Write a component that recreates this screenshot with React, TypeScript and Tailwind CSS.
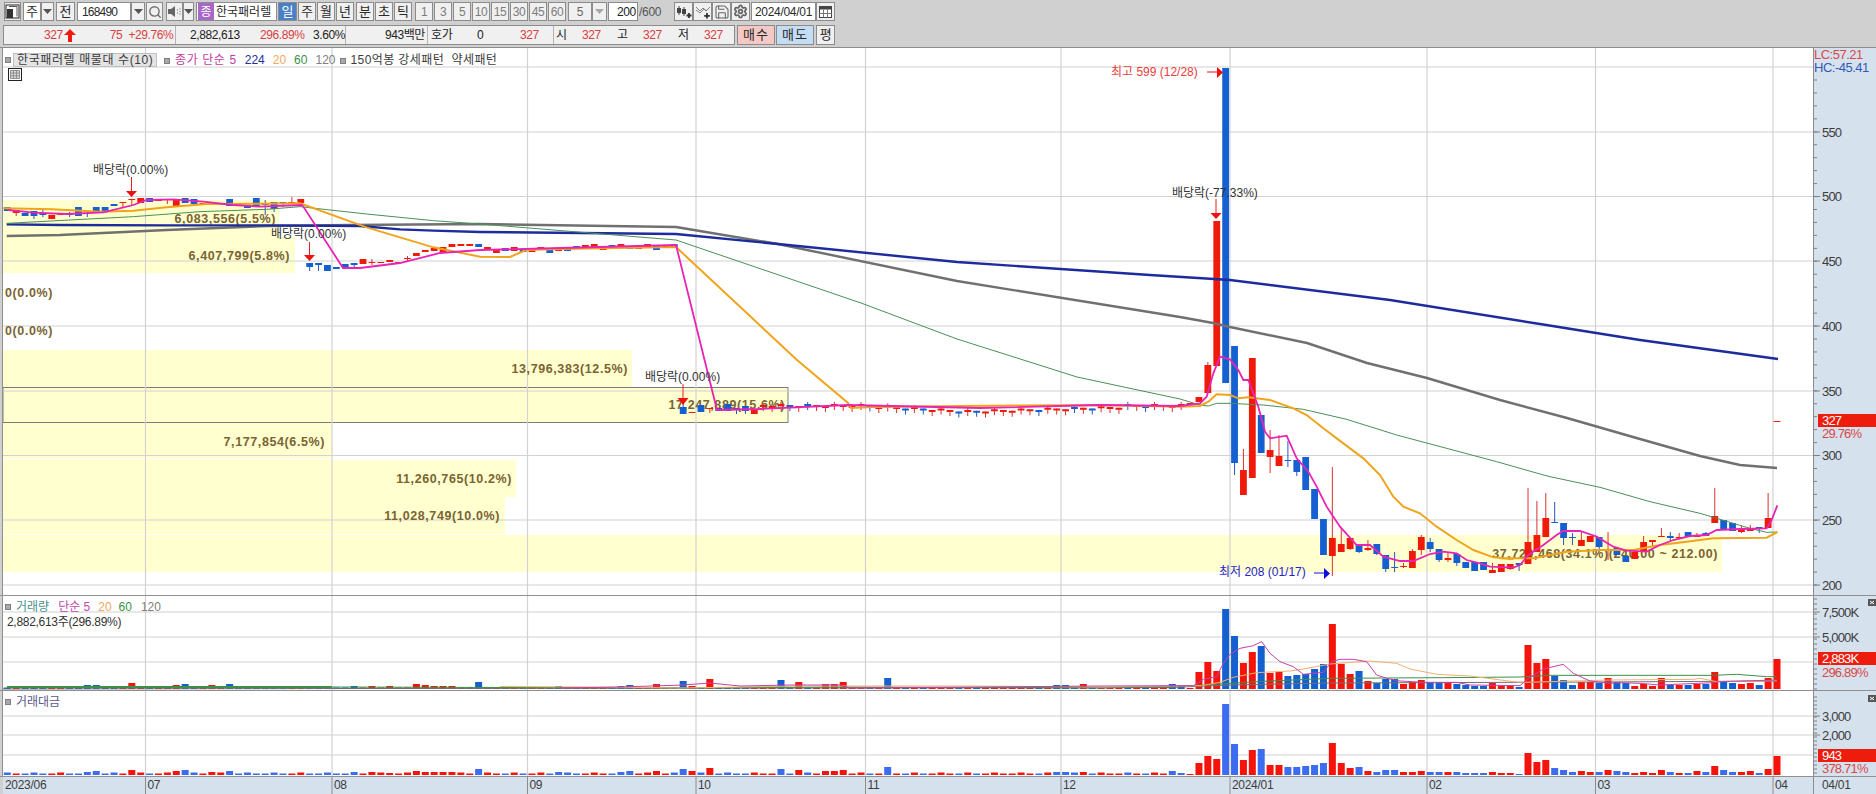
import React from 'react';
import { Search, Save, Settings } from 'lucide-react';
import { twMerge } from 'tailwind-merge';

type Candle = { c: 'r' | 'b'; t: number; b: number; wt?: number; wb?: number };

const cd = (c: 'r' | 'b', t: number, b: number, wt?: number, wb?: number): Candle => ({ c, t, b, wt, wb });

// chart data, traced by hand (screen px)
const head: Candle[] = [
  cd('b', 207, 211), cd('r', 210, 213, 210, 216), cd('b', 213, 216), cd('b', 211, 216, 211, 219), cd('b', 213, 215, 210, 217),
  cd('r', 215, 219), cd('r', 213, 215), cd('b', 214, 215, 212, 217), cd('b', 207, 216), cd('b', 211, 212, 211, 217),
  cd('b', 207, 212), cd('b', 207, 211), cd('b', 204, 206), cd('r', 202, 203, 202, 207), cd('r', 199, 200, 199, 205),
  cd('r', 198, 203), cd('b', 198, 202), cd('r', 200, 201), cd('r', 199, 200, 199, 204), cd('r', 199, 207),
  cd('b', 198, 203), cd('b', 199, 204), cd('r', 203, 204), cd('r', 204, 205), cd('r', 203, 204),
  cd('b', 199, 206), cd('b', 203, 206), cd('b', 205, 208), cd('b', 198, 207), cd('b', 204, 205, 200, 215),
  cd('b', 202, 209, 202, 212), cd('b', 202, 203, 202, 207), cd('r', 202, 204, 197, 204), cd('r', 199, 203),
  cd('b', 263, 267, 263, 271), cd('b', 263, 265, 263, 271), cd('b', 265, 271), cd('b', 267, 269), cd('b', 264, 268),
  cd('b', 263, 265, 263, 267), cd('r', 259, 264), cd('r', 262, 263, 259, 265), cd('r', 262, 263), cd('r', 260, 262),
  cd('r', 262, 263), cd('r', 258, 259, 256, 262), cd('r', 253, 256), cd('r', 250, 252), cd('r', 248, 251),
  cd('r', 247, 252), cd('r', 244, 247), cd('r', 244, 246), cd('r', 244, 246), cd('b', 244, 247),
];

const midPat = 'rbrrbrbbrrrbrbrrbrbbrrbrbbbrrbrbbrrrbrbrrbbrbrrbrrbrbbrrb';

const midBase = (i: number) => {
  if (i < 64) return 247;
  if (i < 76) return 244;
  if (i < 96) return 404;
  if (i < 108) return 404 + (i - 96) / 2;
  if (i < 126) return 410 - (i - 108) / 4;
  return 404;
};

const middle: Candle[] = [];
for (let i = 54; i < 76; i++) {
  const t = midBase(i) + (i * 5) % 3;
  middle.push(cd(midPat[i % midPat.length] as 'r' | 'b', t, t + 3 + (i % 2)));
}
middle.push(
  cd('b', 407, 414, 398, 414), cd('r', 412, 413), cd('b', 405, 412), cd('r', 408, 409, 408, 413), cd('b', 408, 411),
  cd('b', 404, 411), cd('b', 408, 410, 408, 414), cd('b', 406, 411, 406, 414), cd('r', 409, 414),
);
for (let i = 85; i < 133; i++) {
  const t = midBase(i) + (i * 7) % 3;
  middle.push(cd(midPat[(i * 3) % midPat.length] as 'r' | 'b', t, t + 2 + (i * 5) % 5, t - (i % 3 === 0 ? 2 : 0), t + 6));
}
middle.push(cd('r', 403, 405), cd('r', 397, 402));

const tail: Candle[] = [
  cd('r', 365, 393, 362, 393), cd('r', 221, 366), cd('b', 68, 383), cd('b', 346, 463, 346, 475), cd('r', 470, 495, 449, 495),
  cd('r', 358, 478), cd('b', 415, 453), cd('r', 450, 457, 430, 473), cd('r', 456, 466, 435, 466), cd('b', 460, 461, 441, 467),
  cd('b', 460, 472, 460, 476), cd('b', 457, 490), cd('b', 489, 519), cd('b', 519, 555), cd('r', 538, 556, 467, 576),
  cd('r', 544, 552, 528, 552), cd('r', 538, 549, 538, 550), cd('b', 544, 552, 544, 553), cd('r', 548, 550, 540, 551), cd('b', 544, 554, 544, 555),
  cd('b', 555, 569, 555, 572), cd('b', 567, 568, 552, 572), cd('r', 566, 567, 563, 568), cd('r', 551, 568, 549, 568), cd('r', 537, 550, 535, 555),
  cd('b', 542, 549, 538, 552), cd('b', 549, 560, 549, 562), cd('r', 558, 560, 553, 562), cd('b', 554, 563, 554, 566), cd('b', 562, 568),
  cd('b', 562, 571), cd('b', 562, 570), cd('r', 570, 573, 563, 573), cd('r', 564, 572), cd('r', 564, 569, 564, 570),
  cd('b', 563, 565, 563, 571), cd('r', 542, 564, 488, 564), cd('r', 535, 552, 501, 552), cd('r', 518, 537, 493, 537), cd('b', 522, 523, 502, 523),
  cd('b', 523, 538, 523, 545), cd('b', 537, 538, 533, 545), cd('r', 540, 546, 532, 546), cd('r', 536, 542), cd('b', 537, 547, 537, 549),
  cd('r', 550, 551, 532, 560), cd('b', 548, 555), cd('b', 556, 562), cd('r', 552, 559, 550, 559), cd('r', 542, 552, 536, 552),
  cd('r', 540, 542, 540, 547), cd('r', 536, 537, 528, 537), cd('b', 536, 538, 532, 542), cd('r', 537, 538, 533, 538), cd('b', 532, 537),
  cd('r', 536, 537, 533, 537), cd('b', 533, 536, 532, 536), cd('r', 516, 523, 488, 523), cd('b', 520, 530), cd('b', 523, 531),
  cd('r', 529, 532, 526, 533), cd('r', 528, 531, 525, 531), cd('b', 527, 528, 527, 533), cd('r', 518, 528, 493, 528), cd('r', 421, 422),
];

const candles = [...head, ...middle, ...tail];
const xAt = (i: number) => 7.3 + i * 8.893;

// [volume px, trading value px, colour override]
const bars: Record<number, [number, number, ('r' | 'b')?]> = {
  9: [4, 3], 10: [4, 4], 14: [6, 5], 19: [4, 4], 20: [5, 5], 23: [4, 3], 25: [5, 4], 39: [3, 3], 41: [3, 3], 43: [3, 2], 46: [5, 4],
  47: [4, 3], 48: [3, 3], 49: [3, 3], 50: [3, 3], 53: [7, 6], 62: [3, 3, 'b'], 69: [3, 3, 'b'], 70: [4, 4, 'b'], 73: [5, 4, 'r'], 76: [8, 6, 'b'],
  77: [3, 4, 'r'], 79: [10, 7, 'r'], 87: [9, 6, 'b'], 89: [7, 5, 'r'], 92: [5, 4, 'r'], 93: [5, 4, 'r'], 94: [7, 5, 'r'], 99: [11, 8, 'b'],
  118: [4, 3, 'b'], 119: [4, 3, 'b'], 121: [5, 3, 'r'],
  131: [5, 4, 'b'], 132: [3, 2, 'b'], 133: [1, 1, 'r'], 134: [17, 12, 'r'], 135: [27, 19, 'r'], 136: [18, 16, 'r'], 137: [80, 71, 'b'],
  138: [53, 31, 'b'], 139: [26, 15, 'r'], 140: [37, 25, 'r'], 141: [43, 26, 'b'], 142: [16, 10, 'r'], 143: [17, 10, 'r'], 144: [13, 8, 'b'],
  145: [14, 8, 'b'], 146: [15, 9, 'b'], 147: [20, 10, 'b'], 148: [25, 12, 'b'], 149: [65, 32, 'r'], 150: [25, 12, 'r'], 151: [15, 7, 'r'],
  152: [18, 8, 'b'], 153: [8, 4, 'r'], 154: [6, 3, 'b'], 155: [10, 5, 'b'], 156: [10, 5, 'b'], 157: [5, 3, 'r'], 158: [7, 3, 'r'], 159: [9, 4, 'r'],
  160: [7, 3, 'b'], 161: [6, 3, 'b'], 162: [6, 3, 'r'], 163: [5, 3, 'b'], 164: [4, 2, 'b'], 165: [3, 2, 'b'], 166: [3, 2, 'b'], 167: [6, 3, 'r'],
  168: [3, 2, 'r'], 169: [3, 2, 'r'], 170: [2, 1, 'b'], 171: [44, 22, 'r'], 172: [26, 13, 'r'], 173: [30, 15, 'r'], 174: [13, 7, 'b'],
  175: [9, 5, 'b'], 176: [4, 3, 'b'], 177: [7, 4, 'r'], 178: [7, 3, 'r'], 179: [6, 3, 'b'], 180: [11, 5, 'r'], 181: [7, 4, 'b'], 182: [6, 3, 'b'],
  183: [3, 2, 'r'], 184: [5, 3, 'r'], 185: [3, 2, 'r'], 186: [11, 5, 'r'], 187: [4, 3, 'b'], 188: [4, 2, 'r'], 189: [4, 2, 'b'], 190: [5, 4, 'r'],
  191: [5, 3, 'b'], 192: [17, 9, 'r'], 193: [8, 5, 'b'], 194: [6, 3, 'b'], 195: [5, 3, 'r'], 196: [6, 4, 'r'], 197: [4, 2, 'b'], 198: [11, 6, 'r'],
  199: [30, 19, 'r'],
};

const crop = (ox: number, oy: number, pts: number[][]) => pts.map(([x, y]) => `${ox + x / 3},${oy + y / 3}`).join(' ');

const pink = [
  crop(0, 150, [[24, 180], [100, 188], [200, 192], [310, 187], [400, 165], [440, 150], [520, 148], [610, 155], [700, 165], [780, 170], [905, 165]]),
  '303,206 343,268 360,268 400,263 440,253 480,250 560,248 676,245 717,410 760,409 848,405 980,408 1100,405',
  crop(1180, 300, [[0, 318], [60, 310], [80, 290], [100, 220], [120, 170], [150, 178], [175, 210], [190, 240], [205, 240], [235, 320], [255, 395], [270, 415], [320, 407], [350, 475], [385, 515], [410, 560], [440, 620], [480, 680], [530, 735], [570, 735], [610, 770], [660, 783], [700, 783], [750, 762], [790, 755], [830, 760], [860, 780], [900, 790], [930, 800], [1000, 803]]),
  crop(1500, 400, [[60, 495], [85, 465], [130, 435], [170, 405], [190, 393], [240, 393], [290, 410], [340, 440], [380, 452], [440, 455], [480, 435], [520, 420], [570, 408], [620, 405], [650, 390], [720, 387], [800, 385], [815, 360], [832, 316]]),
].join(' ');

const orange = [
  crop(0, 150, [[10, 175], [155, 178], [300, 185], [400, 182], [500, 172], [620, 162], [900, 160], [1100, 232], [1300, 292], [1440, 320]]),
  '510,257 526,250 560,249 676,247 797,360 848,403 851,408 873,407 960,406 1100,405',
  crop(1180, 300, [[0, 320], [60, 318], [85, 305], [110, 283], [150, 285], [175, 295], [205, 292], [270, 300], [340, 325], [380, 345], [430, 385], [490, 430], [550, 475], [600, 525], [640, 590], [670, 620], [720, 640], [770, 680], [830, 720], [880, 750], [940, 772], [1000, 777]]),
  crop(1500, 400, [[0, 475], [100, 475], [200, 455], [300, 450], [400, 450], [480, 435], [560, 425], [640, 415], [800, 413], [832, 396]]),
].join(' ');

const green = [
  crop(0, 150, [[20, 220], [400, 200], [600, 185], [800, 178], [900, 170], [1100, 192], [1300, 212], [1440, 222]]),
  '676,240 861,303 957,339 1077,377 1180,399',
  crop(1180, 300, [[60, 315], [85, 318], [110, 310], [150, 310], [250, 315], [370, 328], [500, 358], [650, 405], [800, 445], [950, 485], [1080, 522]]),
  crop(1500, 400, [[150, 230], [300, 262], [450, 305], [600, 340], [700, 370], [750, 385], [800, 397], [832, 396]]),
].join(' ');

const navy = [
  crop(0, 150, [[20, 223], [180, 225], [500, 226], [800, 226], [1080, 228], [1200, 238], [1300, 242], [1440, 246]]),
  '676,234 778,244 957,262 1150,275 1230,280 1390,300 1540,324 1640,340 1778,359',
].join(' ');

const gray = [
  crop(0, 150, [[20, 258], [180, 255], [500, 240], [800, 228], [1050, 225], [1440, 222]]),
  '676,227 778,244 957,281 1180,317 1213,323 1230,327 1307,343 1367,363 1427,378 1500,400 1567,418 1633,437 1700,456 1740,465 1777,468',
].join(' ');

const volPink = [
  '560,688 620,687 683,685 710,683 740,686 790,685 840,685 850,688 980,687 1100,686',
  crop(1170, 595, [[70, 272], [100, 253], [140, 245], [160, 205], [180, 178], [210, 160], [250, 152], [275, 140], [300, 175], [330, 200], [370, 215], [400, 238], [460, 232], [485, 200], [510, 193], [550, 193], [590, 200], [620, 240], [650, 250], [690, 258], [760, 262], [860, 262], [900, 270], [1050, 272], [1075, 250], [1120, 222], [1180, 208], [1210, 235], [1260, 258], [1320, 265]]),
  crop(1600, 590, [[60, 278], [120, 280], [180, 285], [340, 278], [360, 275], [530, 270]]),
].join(' ');
const volOrange = [
  '500,686.5 600,687 680,688 803,686 971,686 1100,687',
  crop(1170, 595, [[95, 272], [150, 262], [190, 247], [260, 233], [360, 228], [400, 222], [480, 207], [600, 198], [680, 205], [720, 222], [800, 238], [900, 243], [1030, 260], [1060, 262], [1320, 255]]),
  crop(1600, 590, [[280, 268], [300, 265], [350, 275], [530, 272]]),
].join(' ');
const volGreen = [
  '7,687 332,687 680,688 840,687 1100,688',
  crop(1170, 595, [[70, 272], [180, 265], [280, 259], [480, 250], [820, 248], [1050, 246], [1140, 241], [1320, 241]]),
  crop(1600, 590, [[340, 256], [410, 253], [500, 260], [530, 260]]),
].join(' ');
const volGray = '3,689 1170,687.5 1230,685 1330,683 1600,682 1777,681';

const volumeBands = [
  { y: 200, h: 37, w: 279, label: '6,083,556(5.5%)', tx: 276 },
  { y: 237, h: 36, w: 295, label: '6,407,799(5.8%)', tx: 290 },
  { y: 350, h: 37, w: 632, label: '13,796,383(12.5%)', tx: 628 },
  { y: 423, h: 36, w: 332, label: '7,177,854(6.5%)', tx: 325 },
  { y: 460, h: 37, w: 516, label: '11,260,765(10.2%)', tx: 512 },
  { y: 497, h: 37, w: 505, label: '11,028,749(10.0%)', tx: 500 },
  { y: 535, h: 37, w: 1722, label: '37,720,468(34.1%)(240.00 ~ 212.00)', tx: 1718 },
];

const months = [145.5, 332, 527.5, 696, 865.5, 1061, 1230, 1427, 1595.5, 1773];
const monthLabels = ['07', '08', '09', '10', '11', '12', '2024/01', '02', '03', '04'];

const DownArrow = ({ x, y1, y2, tip }: { x: number; y1: number; y2: number; tip: number }) => (
  <g>
    <line x1={x} x2={x} y1={y1} y2={y2} stroke="#e82020" strokeWidth={1} />
    <polygon points={`${x - 5.5},${y2} ${x + 5.5},${y2} ${x},${tip}`} fill="#f01010" />
  </g>
);

const Grid = ({ ys }: { ys: number[] }) => (
  <g stroke="#d2d2d2" strokeWidth={1.2}>
    {ys.map((y) => <line key={y} x1={3} x2={1813} y1={y} y2={y} />)}
    {months.map((x) => <line key={x} x1={x} x2={x} y1={0} y2={800} />)}
  </g>
);

const BarSeries = ({ base, which, blue }: { base: number; which: 0 | 1; blue: string }) => (
  <g>
    {candles.map((k, i) => {
      const o = bars[i];
      const h = o ? o[which] : which === 0 ? 1.5 : 1 + (i % 3 === 0 ? 1.5 : 0.5);
      const color = (o && o[2]) || k.c;
      return <rect key={i} x={xAt(i) - 3.5} y={base - h} width={7} height={h} fill={color === 'r' ? '#f4140c' : blue} />;
    })}
  </g>
);

const MainChart = () => (
  <svg viewBox="3 48 1810 547" className="block h-[547px] w-[1810px] shrink-0">
    <rect x={3} y={48} width={1810} height={547} fill="#ffffff" />
    <g>
      {volumeBands.map((b) => <rect key={b.y} x={3} y={b.y} width={b.w - 3} height={b.h} fill="#ffffcf" />)}
      <rect x={3} y={387.5} width={785} height={35} fill="#ffffcf" stroke="#7c7c7c" strokeWidth={1} />
    </g>
    <Grid ys={[67, 132, 196.5, 261, 326, 391, 455.5, 520, 585]} />
    <g fill="#7a6432" fontSize={12.5} fontWeight={700} letterSpacing={0.6} textAnchor="end">
      {volumeBands.map((b) => <text key={b.y} x={b.tx} y={b.y + b.h / 2 + 4.5}>{b.label}</text>)}
      <text x={785} y={408.5}>17,247,889(15.6%)</text>
      <text x={53} y={296.5}>0(0.0%)</text>
      <text x={53} y={334.5}>0(0.0%)</text>
    </g>
    <g>
      {candles.map((k, i) => {
        const x = xAt(i);
        const fill = k.c === 'r' ? '#f01a0a' : '#1460d0';
        return (
          <g key={i}>
            {k.wt !== undefined && (
              <line x1={x} x2={x} y1={k.wt} y2={k.wb} stroke={k.c === 'r' ? '#dc3030' : '#2a54c0'} strokeWidth={1} />
            )}
            <rect x={x - 3.4} y={k.t} width={6.8} height={k.b - k.t} fill={fill} />
          </g>
        );
      })}
    </g>
    <polyline points={gray} fill="none" stroke="#707070" strokeWidth={2.4} />
    <polyline points={navy} fill="none" stroke="#1c2c9c" strokeWidth={2.4} />
    <polyline points={green} fill="none" stroke="#4a9058" strokeWidth={1} />
    <polyline points={orange} fill="none" stroke="#f0a41c" strokeWidth={2} />
    <polyline points={pink} fill="none" stroke="#e824b4" strokeWidth={1.8} />
    <g fill="#333333" fontSize={12}>
      <text x={93} y={173.5}>배당락(0.00%)</text>
      <text x={271} y={237.5}>배당락(0.00%)</text>
      <text x={645} y={380.5}>배당락(0.00%)</text>
      <text x={1172} y={196.5}>배당락(-77.33%)</text>
    </g>
    <DownArrow x={131.5} y1={177} y2={191} tip={197} />
    <DownArrow x={309.5} y1={242} y2={255} tip={261} />
    <DownArrow x={683} y1={384} y2={398} tip={405} />
    <DownArrow x={1216} y1={199} y2={213} tip={219} />
    <text x={1111} y={76} fill="#e84040" fontSize={12}>최고 599 (12/28)</text>
    <line x1={1207} x2={1218} y1={72} y2={72} stroke="#f01010" />
    <polygon points="1217,67 1217,78 1223,72.5" fill="#f01010" />
    <text x={1219} y={576} fill="#2424c8" fontSize={12}>최저 208 (01/17)</text>
    <line x1={1314} x2={1325} y1={573} y2={573} stroke="#1010d8" />
    <polygon points="1324,568 1324,579 1330,573.5" fill="#1010d8" />
  </svg>
);

const VolumeChart = () => (
  <svg viewBox="3 596 1810 94" className="block h-[94px] w-[1810px] shrink-0">
    <rect x={3} y={596} width={1810} height={94} fill="#ffffff" />
    <Grid ys={[612, 637, 662]} />
    <BarSeries base={689} which={0} blue="#1460d0" />
    <polyline points={volGray} fill="none" stroke="#707070" strokeWidth={1} />
    <polyline points={volGreen} fill="none" stroke="#3c9048" strokeWidth={1} />
    <line x1={7} x2={332} y1={687} y2={687} stroke="#3c9048" strokeWidth={1.8} />
    <polyline points={volOrange} fill="none" stroke="#f0b070" strokeWidth={1} />
    <polyline points={volPink} fill="none" stroke="#c440ac" strokeWidth={1} />
  </svg>
);

const ValueChart = () => (
  <svg viewBox="3 691 1810 85" className="block h-[85px] w-[1810px] shrink-0">
    <rect x={3} y={691} width={1810} height={85} fill="#ffffff" />
    <Grid ys={[716, 735, 755]} />
    <BarSeries base={775} which={1} blue="#3c6cf0" />
  </svg>
);

type AxisProps = {
  top: number;
  height: number;
  majors: { y: number; label: string }[];
  minors: number[];
  tag?: { y: number; h: number; label: string; pct: string; pctY: number };
  closeY?: number;
  children?: React.ReactNode;
};

const Axis = ({ top, height, majors, minors, tag, closeY, children }: AxisProps) => (
  <svg viewBox={`1813 ${top} 63 ${height}`} className="block w-[63px] shrink-0" style={{ height }}>
    <rect x={1813} y={top} width={63} height={height} fill="#d6e1ee" />
    <line x1={1813.5} x2={1813.5} y1={top} y2={top + height} stroke="#8c8c8c" />
    <g stroke="#7f7f7f">
      {minors.map((y) => <line key={y} x1={1814} x2={1817} y1={y} y2={y} />)}
      {majors.map((m) => <line key={m.y} x1={1814} x2={1820} y1={m.y} y2={m.y} />)}
    </g>
    <g fill="#3c3c3c" fontSize={13} letterSpacing={-0.8}>
      {majors.map((m) => <text key={m.y} x={1822} y={m.y + 4.5}>{m.label}</text>)}
    </g>
    {tag && (
      <g fontSize={13} letterSpacing={-0.8}>
        <rect x={1818} y={tag.y} width={58} height={tag.h} fill="#ee1c0c" />
        <text x={1822} y={tag.y + tag.h - 2} fill="#ffffff">{tag.label}</text>
        <text x={1822} y={tag.pctY} fill="#d84848">{tag.pct}</text>
      </g>
    )}
    {closeY !== undefined && (
      <g>
        <rect x={1868} y={closeY} width={8} height={7} fill="#555555" />
        <path d={`M1870 ${closeY + 2}l4 3m0 -3l-4 3`} stroke="#ffffff" strokeWidth={1} />
      </g>
    )}
    {children}
  </svg>
);

const range = (from: number, to: number, step: number) => {
  const out: number[] = [];
  for (let v = from; v <= to; v += step) out.push(v);
  return out;
};

const priceMajors = [
  { y: 132, label: '550' }, { y: 196.5, label: '500' }, { y: 261, label: '450' }, { y: 326, label: '400' },
  { y: 391, label: '350' }, { y: 455.5, label: '300' }, { y: 520, label: '250' }, { y: 585, label: '200' },
];

const Caret = ({ dim }: { dim?: boolean }) => (
  <svg viewBox="0 0 9 5" className="h-[5px] w-[9px]"><polygon points="0,0 9,0 4.5,5" fill={dim ? '#a8a8a8' : '#555555'} /></svg>
);

const Btn = ({ className, children }: { className: string; children?: React.ReactNode }) => (
  <div className={twMerge('flex h-[19px] shrink-0 items-center justify-center border border-[#8c8c8c] bg-[#f0f0f0] text-[13px] text-[#2a2a2a]', className)}>
    {children}
  </div>
);

const Dot = () => <span className="inline-block size-[6px] shrink-0 border border-[#808080] bg-[#a8a8a8]" />;

const Toolbar = () => (
  <div className="h-[47px] shrink-0 bg-[#d0d0d0] pt-[2px]">
    <div className="flex pl-[4px]">
      <Btn className="w-[17px]">
        <svg viewBox="0 0 15 15" className="size-[15px]">
          <rect x="1" y="1" width="13" height="13" fill="#ffffff" stroke="#222222" />
          <rect x="2" y="5" width="6" height="9" fill="#333333" />
          <path d="M4 2.5h8M12 2.5v10" stroke="#555555" fill="none" />
        </svg>
      </Btn>
      <Btn className="ml-[2px] w-[18px] bg-white">주</Btn>
      <Btn className="w-[13px]"><Caret /></Btn>
      <Btn className="ml-[2px] w-[19px]">전</Btn>
      <Btn className="ml-[2px] w-[54px] justify-start bg-white pl-[4px] text-[12px] tracking-[-0.8px]">168490</Btn>
      <Btn className="w-[14px]"><Caret /></Btn>
      <Btn className="ml-px w-[17px]"><Search size={14} strokeWidth={2.4} className="text-[#707070]" /></Btn>
      <Btn className="ml-[3px] w-[17px]">
        <svg viewBox="0 0 15 13" className="h-[13px] w-[15px]">
          <polygon points="1,4 4,4 8,1 8,12 4,9 1,9" fill="#666666" />
          <path d="M10.5 4.5v1M10.5 7.5v1M13 3.5v1M13 6v1M13 8.5v1" stroke="#666666" />
        </svg>
      </Btn>
      <Btn className="w-[11px]"><Caret /></Btn>
      <Btn className="ml-[2px] w-[81px] justify-start bg-white text-[12px]">
        <span className="mx-px flex h-[17px] w-[16px] items-center justify-center bg-[#a868c8] text-[12px] text-white">종</span>
        <span className="ml-px">한국패러렐</span>
      </Btn>
      <Btn className="ml-px w-[19px] bg-[#4a80c8] text-white">일</Btn>
      <Btn className="ml-px w-[18px]">주</Btn>
      <Btn className="ml-px w-[18px]">월</Btn>
      <Btn className="ml-px w-[18px]">년</Btn>
      <Btn className="ml-[2px] w-[18px]">분</Btn>
      <Btn className="ml-px w-[18px]">초</Btn>
      <Btn className="ml-px w-[18px]">틱</Btn>
      <div className="ml-[3px] flex gap-px">
        {['1', '3', '5', '10', '15', '30', '45', '60'].map((n) => (
          <Btn key={n} className="w-[18px] text-[12px] tracking-[-0.5px] text-[#7c7c7c]">{n}</Btn>
        ))}
      </div>
      <Btn className="ml-[2px] w-[24px] text-[12px] text-[#666666]">5</Btn>
      <Btn className="w-[15px]"><Caret dim /></Btn>
      <Btn className="ml-px w-[30px] justify-end bg-white pr-px text-[12px] tracking-[-0.3px] text-[#222222]">200</Btn>
      <span className="ml-px flex h-[19px] w-[35px] shrink-0 items-center text-[12px] tracking-[-0.3px] text-[#555555]">/600</span>
      <Btn className="w-[19px]">
        <svg viewBox="0 0 16 14" className="h-[14px] w-[16px]">
          <path d="M3 1v9M8 2v9" stroke="#444444" />
          <rect x="1" y="3" width="4" height="5" fill="#444444" />
          <rect x="6" y="4" width="4" height="5" fill="#444444" />
          <path d="M13 8v5M10.5 10.5h5" stroke="#333333" strokeWidth="1.8" />
        </svg>
      </Btn>
      <Btn className="w-[19px]">
        <svg viewBox="0 0 16 14" className="h-[14px] w-[16px]">
          <path d="M1 2l4 4 3-3 3 3 4-4M1 5l4 3 4-4 3 2" stroke="#777777" strokeWidth="0.9" fill="none" />
          <path d="M12 8v5.5M9.2 10.8h5.6" stroke="#333333" strokeWidth="1.8" />
        </svg>
      </Btn>
      <Btn className="w-[19px]"><Save size={16} strokeWidth={1.6} className="text-[#666666]" /></Btn>
      <Btn className="w-[19px]"><Settings size={15} strokeWidth={2.8} className="text-[#666666]" /></Btn>
      <Btn className="ml-px w-[65px] bg-white text-[12px] tracking-[-0.3px]">2024/04/01</Btn>
      <Btn className="w-[19px]">
        <svg viewBox="0 0 13 12" className="h-[12px] w-[13px]">
          <rect x="0.5" y="0.5" width="12" height="11" fill="#ffffff" stroke="#444444" />
          <rect x="0.5" y="0.5" width="12" height="3" fill="#444444" />
          <path d="M4.5 3.5v8M8.5 3.5v8M0.5 7.5h12" stroke="#777777" />
        </svg>
      </Btn>
    </div>
    <div className="mt-[4px] flex pl-[3px] text-[12px] tracking-[-0.4px]">
      <div className="flex h-[20px] w-[732px] shrink-0 items-center border border-[#8c8c8c] bg-[#f0f0f0]">
        <div className="flex h-full w-[172px] shrink-0 items-center border-r border-[#b4b4b4] pl-[40px] text-[#d84040]">
          <span>327</span>
          <svg viewBox="0 0 12 13" className="ml-px h-[13px] w-[12px]"><polygon points="6,0 12,6 8,6 8,13 4,13 4,6 0,6" fill="#f01a0a" /></svg>
          <span className="ml-[34px]">75</span>
          <span className="ml-[6px]">+29.76%</span>
        </div>
        <div className="flex h-full w-[170px] shrink-0 items-center border-r border-[#b4b4b4] pl-[14px] text-[#222222]">
          <span className="w-[70px]">2,882,613</span>
          <span className="w-[53px] text-[#d84040]">296.89%</span>
          <span>3.60%</span>
        </div>
        <div className="flex h-full w-[82px] shrink-0 items-center justify-end border-r border-[#b4b4b4] pr-[2px] text-[#222222]">943백만</div>
        <div className="flex h-full w-[126px] shrink-0 items-center border-r border-[#b4b4b4] pl-[3px] text-[#222222]">
          <span className="w-[46px]">호가</span>
          <span className="w-[43px]">0</span>
          <span className="text-[#d84040]">327</span>
        </div>
        <div className="flex h-full flex-1 items-center pl-[2px] text-[#222222]">
          <span className="w-[26px]">시</span>
          <span className="w-[35px] text-[#d84040]">327</span>
          <span className="w-[26px]">고</span>
          <span className="w-[35px] text-[#d84040]">327</span>
          <span className="w-[26px]">저</span>
          <span className="text-[#d84040]">327</span>
        </div>
      </div>
      <Btn className="ml-[2px] h-[20px] w-[38px] bg-[#f4c8c4] tracking-[1px]">매수</Btn>
      <Btn className="ml-px h-[20px] w-[38px] bg-[#c4dcf4] tracking-[1px]">매도</Btn>
      <Btn className="ml-[2px] h-[20px] w-[19px]">평</Btn>
    </div>
  </div>
);

export default function App() {
  return (
    <div className="flex h-[794px] w-[1876px] flex-col overflow-hidden bg-[#d0d0d0] [font-family:'Liberation_Sans','Noto_Sans_CJK_KR',sans-serif]">
      <Toolbar />
      <div className="h-px shrink-0 bg-[#8c8c8c]" />

      {/* price pane */}
      <div className="relative flex shrink-0">
        <div className="w-[3px] shrink-0 border-r border-[#909090]" />
        <MainChart />
        <Axis top={48} height={547} majors={priceMajors} minors={range(80, 590, 12.95)} tag={{ y: 414, h: 13, label: '327', pct: '29.76%', pctY: 438 }}>
          <text x={1814} y={59} fill="#d84848" fontSize={13} letterSpacing={-0.5}>LC:57.21</text>
          <text x={1814} y={72} fill="#3058b8" fontSize={13} letterSpacing={-0.5}>HC:-45.41</text>
        </Axis>
        <div className="absolute left-[5px] top-[3px] flex items-center text-[12px]">
          <Dot />
          <span className="ml-[2px] h-[14px] w-[144px] border border-[#c0c0c0] bg-[#e4e4e4] pl-[3px] leading-[12px] tracking-[0.6px] text-[#3c3c3c]">한국패러렐 매물대 수(10)</span>
          <span className="ml-[7px]"><Dot /></span>
          <span className="ml-[5px] tracking-[0.6px] text-[#c040a0]">종가 단순 5</span>
          <span className="ml-[8px] text-[#24309c]">224</span>
          <span className="ml-[8px] text-[#f0a860]">20</span>
          <span className="ml-[8px] text-[#3c9048]">60</span>
          <span className="ml-[8px] text-[#808080]">120</span>
          <span className="ml-[5px]"><Dot /></span>
          <span className="ml-[4px] whitespace-pre tracking-[0.4px] text-[#3c3c3c]">150억봉 강세패턴  약세패턴</span>
        </div>
        <svg viewBox="0 0 14 13" className="absolute left-[8px] top-[20px] h-[13px] w-[14px]">
          <rect x="0.5" y="0.5" width="13" height="12" fill="#ffffff" stroke="#222222" />
          <path d="M2.5 2.5h9v8h-9zM5.5 2.5v8M8.5 2.5v8M2.5 5h9M2.5 7.8h9" stroke="#909090" fill="#d8d8d8" />
        </svg>
      </div>
      <div className="h-px shrink-0 bg-[#909090]" />

      {/* volume pane */}
      <div className="relative flex shrink-0">
        <div className="w-[3px] shrink-0 border-r border-[#909090]" />
        <VolumeChart />
        <Axis
          top={596}
          height={94}
          majors={[{ y: 612, label: '7,500K' }, { y: 637, label: '5,000K' }]}
          minors={range(599, 689, 5)}
          tag={{ y: 652, h: 13, label: '2,883K', pct: '296.89%', pctY: 677 }}
          closeY={599}
        />
        <div className="absolute left-[5px] top-[2px] text-[12px]">
          <div className="flex items-center">
            <Dot />
            <span className="ml-[5px] text-[#4a9090]">거래량</span>
            <span className="ml-[9px] text-[#c04aa8]">단순 5</span>
            <span className="ml-[8px] text-[#f0a860]">20</span>
            <span className="ml-[7px] text-[#3c9048]">60</span>
            <span className="ml-[9px] text-[#808080]">120</span>
          </div>
          <div className="ml-[2px] leading-[13px] tracking-[-0.3px] text-[#333333]">2,882,613주(296.89%)</div>
        </div>
      </div>
      <div className="h-px shrink-0 bg-[#909090]" />

      {/* trading value pane */}
      <div className="relative flex shrink-0">
        <div className="w-[3px] shrink-0 border-r border-[#909090]" />
        <ValueChart />
        <Axis
          top={691}
          height={85}
          majors={[{ y: 716, label: '3,000' }, { y: 735, label: '2,000' }]}
          minors={range(697, 775, 4)}
          tag={{ y: 749, h: 13, label: '943', pct: '378.71%', pctY: 773 }}
          closeY={695}
        />
        <div className="absolute left-[5px] top-[2px] flex items-center text-[12px]">
          <Dot />
          <span className="ml-[5px] text-[#5a5a88]">거래대금</span>
        </div>
      </div>
      <div className="h-px shrink-0 bg-[#909090]" />

      {/* date axis */}
      <div className="relative flex-1 border-l-[3px] border-[#d0d0d0] bg-[#d6e1ee] text-[12px] leading-[17px] tracking-[-0.3px] text-[#3c3c3c]">
        <svg viewBox="3 777 1873 17" className="absolute inset-0 block h-[17px] w-[1873px]">
          <g stroke="#8c8c8c">
            {months.map((x) => <line key={x} x1={x} x2={x} y1={777} y2={794} />)}
            <line x1={1813.5} x2={1813.5} y1={777} y2={794} />
          </g>
          <g fill="#3c3c3c" fontSize={12} letterSpacing={-0.3}>
            <text x={5} y={789}>2023/06</text>
            {months.map((x, i) => <text key={x} x={x + 2} y={789}>{monthLabels[i]}</text>)}
            <text x={1822} y={789}>04/01</text>
          </g>
        </svg>
      </div>
    </div>
  );
}
